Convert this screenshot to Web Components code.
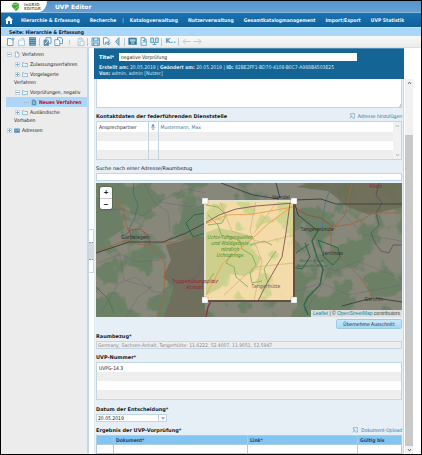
<!DOCTYPE html>
<html lang="de">
<head>
<meta charset="utf-8">
<meta name="viewport" content="width=device-width, initial-scale=1">
<title>UVP Editor</title>
<style>
  :root {
    --ui: "DejaVu Sans Condensed", "DejaVu Sans", sans-serif;
    --wide: "DejaVu Sans", sans-serif;
    --blue: #146496;
    --link: #33749f;
    --line: #c3d6e4;
    --pale: #e6eff6;
  }
  html, body { margin: 0; }
  body { font: 5px/6px var(--ui); color: #222; background: #fff; }
</style>
</head>
<body>
<uvp-app></uvp-app>
<script>
const define = (name, html, setup) => {
  const tpl = document.createElement('template');
  tpl.innerHTML = '<style>*{box-sizing:border-box}button,input,textarea,select{font:inherit;color:inherit;margin:0;border-radius:0}button{padding:0;border:0;background:none;cursor:pointer}a{color:inherit;text-decoration:none}</style>' + html;
  customElements.define(name, class extends HTMLElement {
    constructor() {
      super();
      this.attachShadow({ mode: 'open' }).append(tpl.content.cloneNode(true));
    }
    connectedCallback() { if (setup) setup(this, this.shadowRoot); }
  });
};

/* Icons, drawn on a 9 by 9 grid */
const doc = '<path d="M2 .7h3.3L7.300 2.700v5.600H2z" fill="#fff"/><path d="M5.300.7v2h2" />';
const ICONS = {
  'new': '<path d="M1.500 1.500h3.500l2 2v5h-5.500z" fill="#fff"/><path d="M7 .5v3M5.500 2h3"/>',
  'folder-new': '<path d="M1.500 3h6v5.500h-6z" fill="#fff"/><path d="M6 .5v2M4.500 1.500h3"/>',
  'preview': '<path d="M1.500.5h6v8h-6z" fill="#7fabc9"/><path d="M1.500 2.500h6M1.500 4.500h6M1.500 6.500h6" stroke="#3d7ca6"/>',
  'cut': '<path d="M3 .7h5v5.600H3z" fill="#fff"/><path d="M1 3h4.500v5.500H1z" fill="#5a8fb3"/><path d="M2 7l4-4.500" stroke="#fff"/>',
  'copy': '<path d="M3.500.7h4l1 1.500v4.300h-5z" fill="#fff"/><path d="M.8 2.700h4l1 1.500v4.300h-5z" fill="#fff"/>',
  'up': '<path d="M4.500 3v4.500"/>',
  'paste': '<path d="M2 1.500h5v7H2z"/><path d="M3.500.8h2v1.500h-2zM4 4h4v4.500H4z" fill="#fff"/>',
  'save': '<path d="M1 1h7.500v7.500H1z" fill="#dcebf4"/><path d="M2.500 1v3h4.500V1M2.500 8.500V6H7v2.500" stroke-width="1.200"/>',
  'discard': '<path d="M1.500.7h3.500l2 2v2.500H3.500v2h-2z" fill="#fff"/><path d="M4 5.500l2.300 2.500L8.500 5.500M6.300 8V4"/>',
  'back': '<path d="M6 .7L2.500 4.500 6 8.500z" fill="#9dc4dd"/>',
  'compare': '<path d="M.7 1h8v6.500h-8z" fill="#2c6e9b"/><path d="M2 2.200h5.500v2.500H2z" fill="#a8c9df" stroke="none"/><path d="M3 6h3.500" stroke="#fff"/>',
  'publish': doc + '<path d="M3 6.500l3-3M3.500 3.500h2.500V6"/>',
  'split': '<path d="M.7 1h2.800v4.500H.7zM5.500 1h2.800v4.500H5.500z" fill="#cfe1ed"/><path d="M2.500 7.500h4M4.500 5v3"/>',
  'prev': '<path d="M8.500 4.500H1M3.500 2L1 4.500 3.500 7"/>',
  'next': '<path d="M.5 4.500H8M5.500 2L8 4.500 5.500 7"/>',
  'file': doc,
  'file-full': '<path d="M1.500.7h4l2 2v5.600h-6z" fill="#5f95b8"/><path d="M3 3.500h2M3 5.500h3" stroke="#fff"/>',
  'folder': '<path d="M.6 7.700V2h2.700l1 1h4.200v4.700z" fill="#e9f5fb"/>',
  'card': '<path d="M.5 2h8v5.500h-8z" fill="#4b8fb8"/><path d="M2 4.500h2M5.500 4h2" stroke="#fff"/>',
  'upload': '<path d="M2 3.500V1h6.500v6.500H5"/><path d="M.8 8L4.500 4.500M2.200 4.500h2.300v2.300"/>',
  'person': '<circle cx="4.500" cy="2.200" r="1.500" fill="#5c95ba"/><path d="M1 4.800h7M4.500 4v4.500M2.700 6.800l1.800 1.900 1.800-1.900"/>'
};
class UvpIcon extends HTMLElement {
  connectedCallback() {
    const root = this.shadowRoot || this.attachShadow({ mode: 'open' });
    root.innerHTML = `<style>:host{display:inline-block;flex:none;width:9px;height:9px}svg{display:block;width:100%;height:100%}</style>
      <svg viewBox="0 0 9 9" fill="none" stroke="#5c9ac0" stroke-width=".9" aria-hidden="true">${ICONS[this.getAttribute('name')]}</svg>`;
  }
}
customElements.define('uvp-icon', UvpIcon);

define('uvp-header', `<style>
  :host{display:flex;height:12px;align-items:stretch;background:linear-gradient(#5794cb,#66a0d3);color:#fff;border-bottom:1px solid #8ab8dd;font:bold 6px/11px var(--wide)}
  .logo{display:flex;align-items:center;gap:4px;width:46px;padding-left:10px;background:#fff;border-bottom-right-radius:8px 11px;color:#6b7a6c;font:bold 4px/4px "DejaVu Sans",sans-serif}
  svg{width:9px;height:9px}
  .name{padding-left:8px}
</style>
<div class="logo"><svg viewBox="0 0 9 9"><path d="M.5 3Q2 0 5 .5 9 1 8 5 7 8.500 4.500 9 3 6 1.500 5.500z" fill="#4aa83a"/><path d="M1 2.500Q4 3 8 1.500M3.500 8Q5 5 8 4" stroke="#a5d98c" fill="none" stroke-width=".8"/></svg><span>InGRID<br>EDITOR</span></div>
<div class="name">UVP Editor</div>`);

define('uvp-nav', `<style>
  :host{display:block;background:linear-gradient(#1a72b3,#11619b);color:#e8f2fa;font-weight:bold}
  nav{display:flex;align-items:center;height:14px;padding-left:4px;gap:10px}
  svg{display:block;width:8px;height:8px}
  .home{margin-right:-2px}
  .sep{font-weight:normal;margin:0 -4px}
  a{white-space:nowrap}
</style>
<nav>
 <a class="home" href="#" aria-label="Start"><svg viewBox="0 0 8 8" fill="#fff"><path d="M0 4L4 0l4 4H7v4H5V5H3v3H1V4z"/></svg></a>
 <a href="#">Hierarchie &amp; Erfassung</a><a href="#">Recherche</a><span class="sep">|</span>
 <a href="#">Katalogverwaltung</a><a href="#">Nutzerverwaltung</a><a href="#">Gesamtkatalogmanagement</a><a href="#">Import/Export</a><a href="#">UVP Statistik</a>
</nav>`);

define('uvp-pagebar', `<style>:host{display:block;padding:0 8px;background:#a9d7fa;border-top:1px solid #c4e2fa;color:#102030;font-weight:bold;line-height:8px}</style><slot></slot>`);

define('uvp-toolbar', `<style>
  :host{display:flex;align-items:center;height:12px;padding-left:5px;gap:2px;background:linear-gradient(#f9f9f9,#ececec);border-bottom:1px solid #ddd}
  button{display:flex}
  i{width:1px;height:8px;background:#b5c7d3;margin-right:1px}
  .dim{opacity:.45}
  b{font:bold 7px/9px var(--wide);color:#5c9ac0;width:11px}
</style>`, (host, root) => {
  if (root.querySelector('button')) return;
  const items = [['new', 'Neu'], ['folder-new', 'Neuer Ordner', 1], ['preview', 'Vorschau'], 0,
    ['cut', 'Ausschneiden'], ['copy', 'Kopieren'], ['up', 'Teilbaum', 1], ['paste', 'Einfügen', 1], 0,
    ['save', 'Speichern'], ['discard', 'Verwerfen'], ['back', 'Rückgängig'], 0,
    ['compare', 'Vergleich'], ['publish', 'Veröffentlichen'], ['split', 'Teilen'], 0, 'K', 0,
    ['prev', 'Zurück', 1], ['next', 'Weiter', 1]];
  root.innerHTML += items.map(t => t === 0 ? '<i></i>' : t === 'K' ? '<button><b>K..</b></button>'
    : `<button aria-label="${t[1]}"${t[2] ? ' class="dim"' : ''}><uvp-icon name="${t[0]}"></uvp-icon></button>`).join('');
});

define('uvp-node', `<style>
  :host{display:block;line-height:10px}
  .row{display:flex;align-items:center;height:10px;gap:2px;padding-left:6px;white-space:nowrap}
  :host([level="1"]) .row{padding-left:14px}
  :host([level="2"]) .row{background:#acd7fb;color:#c0141c;font-weight:bold;margin-left:5px;padding-left:18px}
  button{display:grid;place-items:center;width:5px;height:5px;border:1px solid #c6d7e2;background:#fff}
  .dots{width:5px;border-top:1px dotted #aaa}
</style>
<div class="row"><uvp-icon></uvp-icon><a href="#"><slot></slot></a></div><slot name="more"></slot>`, (host, root) => {
  const state = host.getAttribute('state');
  const row = root.querySelector('.row');
  if (row.children.length > 2) return;
  row.insertAdjacentHTML('afterbegin', state ? `<button aria-label="${state === '-' ? 'Zuklappen' : 'Aufklappen'}"><svg width="3" height="3"><path d="M0 1.500h3${state === '+' ? 'M1.500 0v3' : ''}" stroke="#86aec6"/></svg></button>` : '<span class="dots"></span>');
  const icon = document.createElement('uvp-icon');
  icon.style.cssText = 'width:6px;height:7px';
  icon.setAttribute('name', host.getAttribute('icon'));
  root.querySelector('uvp-icon').replaceWith(icon);
});

define('uvp-tree', `<style>
  :host{display:block;background:#ececec;padding-top:1px;border-right:2px solid #bdd9ee;overflow:hidden}
  [slot=more]{display:block;padding:0 0 2px 13px;line-height:6px}
</style>
<uvp-node level="0" state="-" icon="file">Verfahren</uvp-node>
<uvp-node level="1" state="+" icon="folder">Zulassungsverfahren</uvp-node>
<uvp-node level="1" state="+" icon="folder">Vorgelagerte<span slot="more">Verfahren</span></uvp-node>
<uvp-node level="1" state="-" icon="folder">Vorprüfungen, negativ</uvp-node>
<uvp-node level="2" icon="file-full">Neues Verfahren</uvp-node>
<uvp-node level="1" state="+" icon="folder">Ausländische<span slot="more">Vorhaben</span></uvp-node>
<uvp-node level="0" state="+" icon="card">Adressen</uvp-node>`);

define('uvp-splitter', `<style>
  :host{display:flex;flex-direction:column;justify-content:center;background:#fff}
  .grip{height:44px;display:grid;align-items:center;border:1px solid #d6d6d6;border-left:0}
  .thumb{height:18px;background:#d9d9d9;border:dotted #999;border-width:1px 0}
</style><div class="grip"><div class="thumb"></div></div>`);

define('uvp-scrollbar', `<style>
  :host{display:flex;flex-direction:column;align-items:center;width:8px;background:#f1f1f1}
  svg{display:block;flex:none;width:5px;height:8px}
  .track{flex:1;width:100%;padding-top:var(--offset,0)}
  .thumb{height:100%;background:var(--thumb,transparent)}
  path{fill:none;stroke:var(--arrow,#777)}
</style>
<svg viewBox="0 0 5 8"><path d="M1 5l1.500-2L4 5"/></svg><div class="track"><div class="thumb"></div></div>
<svg viewBox="0 0 5 8"><path d="M1 3l1.500 2L4 3"/></svg>`);

define('uvp-title', `<style>
  :host{display:block;background:var(--blue);color:#d5e8f5;border-top:1px solid #4d8cb5;padding:4px 5px 4px;height:31px}
  .row{display:flex;align-items:center;margin-bottom:3px}
  label{width:20px;font:bold 5px/8px var(--wide);color:#fff}
  input{flex:0 1 238px;min-width:0;height:8px;border:1px solid #fff;background:#fff;color:#222;padding:0 1px;line-height:6px}
  p{margin:0}
</style>
<div class="row"><label for="t">Titel*</label><input id="t" value="negative Vorprüfung"></div>
<p><b>Erstellt am:</b> 20.05.2019 | <b>Geändert am:</b> 20.05.2019 | <b>ID:</b> 82BE2FF1-BD70-4108-B0C7-A988B4503E25</p>
<p><b>Von:</b> admin, admin [Nutzer]</p>`);

define('uvp-map', `<style>
  :host{display:block;position:relative;overflow:hidden;background:#7d8370}
  .map{display:block;width:100%;height:auto}
  .zoom{position:absolute;left:4px;top:4px;display:grid;width:12px;border-radius:2px;overflow:hidden;background:#fff;box-shadow:0 0 0 1px #5d6a56}
  .zoom button{height:11px;font:bold 8px/11px "Liberation Sans",sans-serif;color:#222}
  .zoom button+button{border-top:1px solid #ccc}
  .credit{position:absolute;right:0;bottom:0;padding:0 2px;background:#dcdedb;color:#444;font:5px/7px "Liberation Sans",sans-serif}
  .credit a{color:#1688b0}
</style>
<svg class="map" viewBox="0 0 306 134" role="img" aria-label="Karte">
 <defs>
  <filter id="wood" x="0" y="0" width="100%" height="100%" color-interpolation-filters="sRGB"><feTurbulence type="fractalNoise" baseFrequency=".035" numOctaves="4" seed="8"/><feColorMatrix values="0 0 0 0 .41  0 0 0 0 .5  0 0 0 0 .39  12 0 0 0 -5.600"/></filter>
  <filter id="park" x="0" y="0" width="100%" height="100%" color-interpolation-filters="sRGB"><feTurbulence type="fractalNoise" baseFrequency=".05" numOctaves="3" seed="4"/><feColorMatrix values="0 0 0 0 .82  0 0 0 0 .83  0 0 0 0 .56  12 0 0 0 -6.300"/></filter>
  <pattern id="hatch" width="3" height="3" patternUnits="userSpaceOnUse" patternTransform="rotate(45)"><path d="M0 0v3" stroke="#7b655a" stroke-width=".7"/></pattern>
  <clipPath id="sel"><path d="M109 18h89v100h-89z"/></clipPath>
 </defs>
 <path fill="#87887a" d="M0 0h306v134H0z"/>
 <path d="M0 0h306v134H0z" filter="url(#wood)" opacity=".9"/>
 <path fill="#6a7f66" d="M0 14l10 3 14 10 2 20-12 8-14 6zM86 32l14-9 9-1v34l-18-4-9-8z"/>
 <path fill="#6b6c54" opacity=".8" d="M200 4l14-4h92v24l-32 8-22-8-20-16z"/>
 <path fill="#706f5e" d="M70 62l30-8 9 0v80H68l10-30-11-10 8-17z"/>
 <path fill="url(#hatch)" opacity=".5" d="M70 62l30-8 9 0v80H68l10-30-11-10 8-17z"/>
 <g fill="none" stroke="#686078" stroke-width=".6" opacity=".65">
  <path d="M0 29l25-3 22 7 18-14 30 5 14-6M48 0l10 19 14 10 2 20M62 19L90 6l20 4M2 80l22-9 18 8 22-2M5 130l18-30 17-6 16 14 12 2M24 71l4 26 28 8M57 120l12-14 30-12 10-14M82 108l20-16 4-18M200 60l18 20 22 8 22-10 44 18M200 108l26-8 26 12 54-10M204 134l20-28 10-20M240 2l8 30 20 20 38 6M98 72l11 4M30 134l12-20 14-10"/>
  <path stroke="#5b3d60" stroke-width="1" d="M283 0l-3 12 6 8-6 10 3 12-8 8 4 10 6 8 8 2 4-8 9 0"/>
 </g>
 <g fill="none" stroke="#45746f" stroke-width="1"><path d="M38 0l-1 10 5 12-3 12-6 12 2 8M0 104l12 12 6 14"/><path d="M236 3l-5 11-3 12-2 22" stroke="#4b7a90"/></g>
 <g fill="none" stroke="#9a6a4a" stroke-width="1">
  <path d="M12 0l3 14 12 12 4 18 2 6M0 68l15-5 16-6 10 4 11 1 10 8 7 9-1 30-6 26M52 61l26-2 20-8"/>
  <path stroke="#a34c48" d="M29 52l6-5 9-1 9 7 1 9M200 25l11 7 14 3 12 9"/><path d="M237 44l18-3 13-5 8-6h30"/>
  <path d="M235 44v25l15 11 14 14 14 21M256 0l-7 32-11 12"/>
 </g>
 <path fill="none" stroke="#45424a" stroke-width="1" d="M0 70l33-11 34 0 23-9 19-10M198 17l27-1 15 5h66M125 0l32 12 26 4M184 15l-4-15M198 18l4 14 20 16M280 115l26 4M276 115l-30 8"/>
 <g fill="none" stroke="#2f6748" stroke-width="1.400">
  <path d="M223 46l-7 12 5 16 6 12-3 16-12 12-4 8 4 10"/><path d="M222 57l20 8 2 9-7 8-9-8-6-17M209 60l5 14-8 12-10-2M90 40l8-8 11-2v20l-12 4zM200 70l13-9" stroke-width="1"/>
 </g>
 <path fill="none" stroke="#8b2f4e" stroke-width="1.400" d="M116 116l-4 8-2 10"/>
 <g clip-path="url(#sel)">
  <path fill="#f4dcaa" d="M109 18h89v100h-89z"/>
  <path d="M109 18h89v100h-89z" filter="url(#park)"/>
  <path fill="#ccd08c" d="M109 50l13-5 20 4 14 4-2 14 12 8-8 14-10 4-14-2-10 14-15 8z"/>
  <g fill="none" stroke="#8fb35d" stroke-width="1"><path d="M110 22l12 2 8 8-4 8-14 2M112 32l10 10 4 12M130 52l14 6 2 8 10 6 4 10-6 8 2 10 10-2M136 70l-6 10 8 4 2 10 12 10M154 62l14-4 8 4M180 68l-12 18 4 14M118 90l-6 8"/></g>
  <g fill="none" stroke="#d3af7c" stroke-width=".7"><path d="M124 18l12 30 30 12 32-8M160 18l-6 30 12 30-8 40M198 80l-40 4-30 28M180 20l-22 30"/></g>
  <path fill="none" stroke="#f0a44f" stroke-width="1" d="M110 112l17-32 31-26 15-14 25-18M109 41l22-9 26-1 40-7"/>
  <path fill="none" stroke="#8a6555" stroke-width="1" d="M109 40l14-8 17-6 20-3 38-3M194 20l-4 30-4 24-16 28-8 16"/>
 </g>
 <path fill="none" stroke="#655040" stroke-width="2" d="M109 118h89V18"/>
 <path fill="none" stroke="#dfe1d5" stroke-width="2" d="M109 118V18h89"/>
 <g fill="#fff" stroke="#8a8a80" stroke-width=".4"><path d="M106 15h6v6h-6zM195 15h6v6h-6zM106 114h6v6h-6zM195 114h6v6h-6z"/></g>
 <g font-family="Noto Sans, sans-serif" font-size="5" text-anchor="middle" fill="#33302f">
  <text x="39" y="56">Gardelegen</text><text x="185" y="16">Stendal</text><text x="221" y="48">Tangermünde</text><text x="237" y="72">Jerichow</text><text x="278" y="118">Genthin</text><text x="170" y="105" fill="#7b6657">Tangerhütte</text>
  <g font-style="italic" fill="#9c2634"><text x="99" y="100">Truppenübungsplatz</text><text x="99" y="106">Altmark</text></g>
  <text x="280" y="5" fill="#9c2634">Klietz</text>
  <g font-style="italic" fill="#5b8f33"><text x="134" y="56">Uchte-Tangerquellen</text><text x="134" y="62">und Waldgebiete</text><text x="134" y="68">nördlich</text><text x="134" y="74">Uchtspringe</text></g>
  <g font-style="italic" font-size="4" fill="#2f6748"><text x="216" y="79">Bucher Brack-</text><text x="216" y="84">Bölsdorfer Haken</text></g>
 </g>
</svg>
<div class="zoom"><button aria-label="Vergrößern">+</button><button aria-label="Verkleinern">−</button></div>
<div class="credit"><a href="#">Leaflet</a> | © <a href="#">OpenStreetMap</a> contributors</div>`);

/* Heading line of a form section, with room for an action at its right end */
define('uvp-heading', `<style>
  :host{display:flex;justify-content:space-between;align-items:center;height:10px;font:bold 5px/10px var(--wide);color:#1b1b1b}
  :host([plain]){font-weight:normal}
  ::slotted(a){display:flex;align-items:center;gap:3px;font:5px/10px var(--ui)}
</style><slot></slot><slot name="action"></slot>`);

define('uvp-form', `<style>
  :host{display:block;background:var(--pale);padding:0 1px 1px 2px;border-right:1px solid #c9d9e5}
  section{margin-bottom:3px}
  .map{margin-bottom:2px}
  .date{margin-top:4px}
  textarea{display:block;width:100%;height:29px;border:1px solid var(--line);border-top:0;background:linear-gradient(135deg,transparent 50%,#ccc 50%) right bottom/3px 3px no-repeat #fff;resize:none}
  input{display:block;width:100%;height:8px;border:1px solid var(--line);background:#fff;padding:0 1px;line-height:6px}
  input:disabled{background:#eee;color:#888}
  a{color:var(--link)}
  uvp-icon{width:6px;height:6px}
  table{width:100%;border-collapse:collapse;table-layout:fixed;background:#fff}
  td,th{padding:0 2px;text-align:left;line-height:8px}
  .box{display:flex;border:1px solid var(--line)}
  .box tr{height:9px}
  .box tr:nth-child(even){background:#eee}
  .box.contact tr:first-child{height:10px}
  .box.contact td+td{border-left:1px solid var(--line)}
  .box.contact td:nth-child(2){padding:0 1px}
  .contact table{flex:1}
  .contact uvp-icon{display:block}
  .contact uvp-scrollbar{--arrow:#bbb}
  .go{display:block;width:66px;height:10px;margin-left:auto;border:1px solid #9ccbe8;border-radius:2px;background:linear-gradient(#c9e8fb,#a9d7f3);color:#222;font-size:5px;line-height:8px}
  .combo{display:flex;width:71px;border:1px solid var(--line);background:#fff}
  .combo input{border:0;height:6px;flex:1;min-width:0}
  .combo button{width:8px;height:6px;border-left:1px solid var(--line);display:grid;place-items:center}
  .docs th{background:#84c4f1;color:#1d4c70}
  .docs tr{height:9px}
  .docs td,.docs th{border:1px solid #a9cbe3}
</style>
<section><textarea aria-label="Beschreibung"></textarea></section>
<section>
 <uvp-heading>Kontaktdaten der federführenden Dienststelle<a slot="action" href="#"><uvp-icon name="upload"></uvp-icon>Adresse hinzufügen</a></uvp-heading>
 <div class="box contact"><table aria-label="Kontaktdaten"><colgroup><col style="width:51px"><col style="width:10px"><col></colgroup>
  <tr><td>Ansprechpartner</td><td><uvp-icon name="person"></uvp-icon></td><td><a href="#">Mustermann, Max</a></td></tr>
  <tr><td></td><td></td><td></td></tr><tr><td></td><td></td><td></td></tr><tr><td></td><td></td><td></td></tr></table><uvp-scrollbar></uvp-scrollbar></div>
</section>
<section class="map"><label for="s"><uvp-heading plain>Suche nach einer Adresse/Raumbezug</uvp-heading></label><input id="s"></section>
<section class="map"><uvp-map></uvp-map></section>
<section class="map"><button class="go">Übernehme Ausschnitt</button></section>
<section><label for="r"><uvp-heading>Raumbezug*</uvp-heading></label><input id="r" disabled value="Germany, Sachsen-Anhalt, Tangerhütte: 11.6222, 52.4007, 11.9051, 52.5947"></section>
<section><uvp-heading>UVP-Nummer*</uvp-heading>
 <div class="box"><table aria-label="UVP-Nummer"><tr><td>UVPG-14.3</td></tr><tr><td></td></tr><tr><td></td></tr><tr><td></td></tr></table></div></section>
<section class="date"><label for="d"><uvp-heading>Datum der Entscheidung*</uvp-heading></label>
 <div class="combo"><input id="d" value="20.05.2019"><button aria-label="Kalender"><svg width="4" height="3"><path d="M0 0h4L2 3z" fill="#9db4c4"/></svg></button></div></section>
<section><uvp-heading>Ergebnis der UVP-Vorprüfung*<a slot="action" href="#"><uvp-icon name="upload"></uvp-icon>Dokument-Upload</a></uvp-heading>
 <table class="docs"><colgroup><col style="width:17px"><col style="width:134px"><col><col style="width:44px"></colgroup>
 <tr><th></th><th>Dokument*</th><th>Link*</th><th>Gültig bis</th></tr><tr><td></td><td></td><td></td><td></td></tr></table></section>`);

define('uvp-app', `<style>
  :host{display:flex;flex-direction:column;height:100vh;overflow:hidden;border:1px solid #000;box-sizing:border-box}
  main{flex:1;min-height:0;display:grid;grid-template-columns:88px 5px minmax(0,1fr) 17px}
  .work{display:flex;flex-direction:column;min-height:0;overflow:hidden}
  .side{padding:31px 8px 0 1px;display:flex}
  .side uvp-scrollbar{--thumb:#c8c8c8;--offset:48px}
</style>
<uvp-header></uvp-header><uvp-nav></uvp-nav><uvp-pagebar>Seite: Hierarchie &amp; Erfassung</uvp-pagebar><uvp-toolbar></uvp-toolbar>
<main>
 <uvp-tree></uvp-tree><uvp-splitter></uvp-splitter>
 <div class="work"><uvp-title></uvp-title><uvp-form></uvp-form></div>
 <div class="side"><uvp-scrollbar></uvp-scrollbar></div>
</main>`);
</script>
</body>
</html>
